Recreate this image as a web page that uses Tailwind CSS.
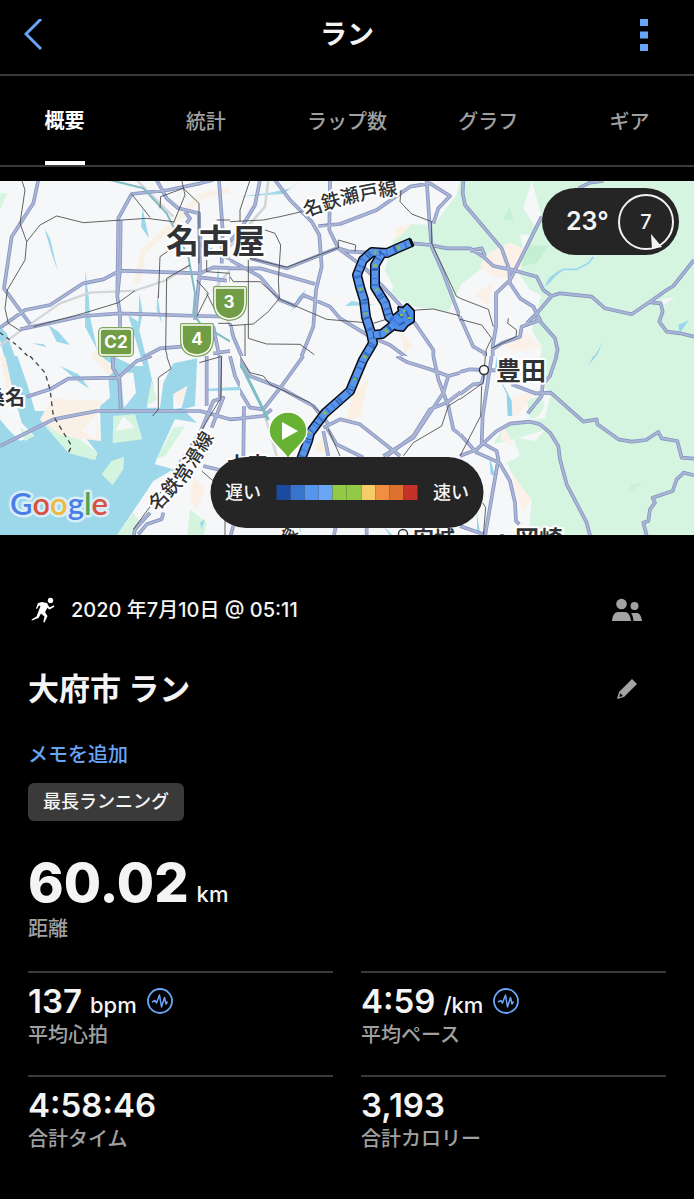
<!DOCTYPE html>
<html lang="ja">
<head>
  <meta charset="UTF-8" />
  <meta name="viewport" content="width=device-width, initial-scale=1" />
  <title>ラン</title>
  <script src="https://cdn.jsdelivr.net/npm/@tailwindcss/browser@4"></script>
</head>
<body class="bg-black text-[#f4f4f4] font-['Inter','Noto_Sans_CJK_JP',sans-serif] min-h-screen overflow-x-hidden">

  <header class="grid grid-cols-3 items-center h-[76px] pl-6 pr-[46px] pb-1 border-b-2 border-[#3a3a3a]">
    <button aria-label="戻る" class="w-6 h-8">
      <svg viewBox="0 0 24 32" class="w-6 h-8 fill-none stroke-[#69a5f7] stroke-[3]"><path d="M17 0L2 15L17 30" /></svg>
    </button>
    <h1 class="pl-[22px] text-center text-[27px] leading-8 font-bold">ラン</h1>
    <button aria-label="メニュー" class="w-2 h-8 justify-self-end">
      <svg viewBox="0 0 8 32" class="w-2 h-8 fill-[#69a5f7]"><path d="M0 0h8v7H0zM0 12.500h8v7H0zM0 25h8v7H0z" /></svg>
    </button>
  </header>

  <nav class="grid grid-cols-5 -mx-[6px] h-[91px] border-b-2 border-[#3a3a3a] text-xl font-medium text-[#a0a0a0]">
    <button class="flex justify-center"><span class="h-[89px] pt-px leading-[89px] border-b-4 border-white text-white font-bold">概要</span></button>
    <button class="pt-[3px] leading-[86px]">統計</button>
    <button class="pt-[3px] leading-[86px]">ラップ数</button>
    <button class="pt-[3px] leading-[86px]">グラフ</button>
    <button class="pt-[3px] leading-[86px]">ギア</button>
  </nav>

  <section class="relative mt-[14px]">
    <svg viewBox="0 181 694 354" class="block w-full h-auto font-['Noto_Sans_CJK_JP',sans-serif]" stroke-linejoin="round" role="img" aria-label="地図">
      <!-- north west -->
      <svg x="0" y="180" width="240" height="180" viewBox="0 0 720 540">
        <defs>
          <path id="road-nw" d="M115 0L100 70L35 170L12 325L90 432M0 443L75 390L150 375L250 310L310 298L360 272L600 280L640 262L720 265M640 0L600 10L505 30L395 42L355 115L352 350L360 400V440M362 120L360 270L352 350M60 448L250 408L360 400L600 408L680 410M470 0L500 55L535 85L597 100L600 270L585 420M555 95L570 115L560 130M657 0L668 150L665 250M600 292L680 302M415 540L480 505L545 500M640 440L660 540M690 430L720 500M640 520L690 513L720 540M600 170L610 200L720 250" />
        </defs>
        <rect width="720" height="540" fill="#f6f7f8" />
        <path d="M410 310L430 215L540 110L600 50L680 30L720 40M280 530L310 500" fill="none" stroke="#faf1e6" stroke-width="18" />
        <path d="M0 40H22L0 90Z" fill="#d6f5e1" />
        <path d="M133 145L150 175L173 272L158 230ZM428 85L435 120L447 175L423 140ZM256 270L266 350L270 410L292 510L255 440ZM418 340L428 400L418 450L440 540H425L395 440L385 405L415 425ZM145 435L175 455L210 495L170 485ZM95 490L130 492L140 502ZM0 440L20 460L48 540H15L0 480ZM472 340L485 430L470 390ZM655 260L660 330L650 300Z" fill="#9cd8e9" />
        <path d="M0 497L80 440L180 370L270 338L405 332L500 300L570 255M410 0L450 40L520 110M720 235L640 330L720 500" fill="none" stroke="#d4d5d7" stroke-width="7" />
        <use href="#road-nw" fill="none" stroke="#8695c1" stroke-width="11" />
        <use href="#road-nw" fill="none" stroke="#abb5d5" stroke-width="6" />
        <path d="M330 0L430 25L500 100L565 230L585 340L580 400L600 430L700 490L720 515" fill="none" stroke="#7fbcc4" stroke-width="6" />
        <path d="M65 0L75 30L60 130L80 185L75 240L22 330L15 385L25 430L60 452M80 185L120 135L170 108L250 128L440 115L520 125M395 42L450 112M100 440L250 400L355 368L405 332M545 0L555 45L520 130M480 85L482 50L550 25L597 70V250M475 355L480 230L530 195M570 255L500 295L497 510L505 540M620 240V275L690 280V305M590 300L625 340L590 410M645 390L620 340M650 120H720M655 430H720" fill="none" stroke="#444" stroke-width="2.500" />
        <path d="M0 458L50 495L95 540" fill="none" stroke="#444" stroke-width="4" stroke-dasharray="12 12" />
      </svg>
      <!-- north -->
      <svg x="230" y="180" width="240" height="180" viewBox="0 0 720 540">
        <defs>
          <path id="road-n" d="M90 0L75 75L30 150L0 185M135 0L180 60L245 125L268 165L275 260L258 330L250 440L210 540M300 0L298 150L325 205L400 260L440 300L510 375L555 430L610 510V540M265 138L330 132L440 90L540 20L600 10L660 48L625 85L610 130M590 0L598 120L605 200L640 280L720 490M0 265L90 265L255 312M0 240L90 290L150 360L195 378L220 345L300 380L330 415L420 470L480 495L540 540M325 205L360 215L420 218M550 190L600 195L650 205H720M700 0L705 70L720 95M60 235L170 265L325 203M0 430L10 470L40 540" />
        </defs>
        <rect width="720" height="540" fill="#f6f7f8" />
        <path d="M490 180L540 132L610 135L680 45L690 0H720V300L690 320L655 395L555 380L480 345L490 320L465 270Z" fill="#d6f5e1" />
        <path d="M495 145L548 130L500 180ZM515 460L550 500L522 520Z" fill="#faf0e4" />
        <path d="M345 378L365 363L435 375ZM230 328L205 350L180 400ZM30 50L120 38L180 25L215 0L160 42Z" fill="#a0daea" />
        <path d="M115 0L105 80L0 200" fill="none" stroke="#d4d5d7" stroke-width="8" />
        <use href="#road-n" fill="none" stroke="#8695c1" stroke-width="11" />
        <use href="#road-n" fill="none" stroke="#abb5d5" stroke-width="6" />
        <path d="M60 0L30 90V125M0 125L100 120L150 110L215 95M105 150L135 160L152 195L145 300L148 355L115 395L70 432L0 437M0 290L10 305H90L150 358M55 240V475L110 492L210 493L253 524M150 358L290 418L430 430L560 390L610 387L720 415M325 205V180L377 195L375 215M513 30L510 65L545 102L605 125V190L680 350L720 365M60 235L170 262L325 203M45 435V540" fill="none" stroke="#444" stroke-width="2.500" />
      </svg>
      <!-- north east -->
      <svg x="460" y="180" width="234" height="180" viewBox="0 0 702 540">
        <defs>
          <path id="road-ne" d="M10 0L8 40L15 75L125 205L148 270L150 310L180 355L220 380L245 430L285 475L293 510L285 540M0 205L30 205L70 230L100 258L150 268L230 290L250 330L275 348L300 340L395 350L435 385L515 403L570 365L620 330L640 318L702 240M570 367L602 370L608 395L598 425L620 455L660 460L702 470M245 110L205 190L150 300L108 340V440L98 500V540M30 212L65 205L75 228M275 348L235 395L200 430M220 410L240 420L185 440L180 470L125 490L95 510M0 410L40 500L75 520V540M355 25L390 8L430 3" />
        </defs>
        <rect width="702" height="540" fill="#d6f5e1" />
        <path d="M215 0L245 110L225 140L190 85ZM180 163L210 165L190 210ZM0 315L60 270L140 190L190 210L175 280L210 330L243 345L230 400L215 450L245 500L240 540H0ZM605 358L645 352L610 375Z" fill="#f6f7f8" />
        <path d="M60 255L90 215L150 188L190 205L185 260L165 300L100 290ZM42 345L100 305L85 380ZM130 500L200 460L245 500L180 515Z" fill="#fbf1e8" />
        <path d="M200 195L265 198L230 250L183 258ZM150 80L160 120L130 120Z" fill="#c5efd2" />
        <path d="M252 322L268 293L305 265L270 308ZM655 435L687 420L660 458ZM430 485L396 540H404Z" fill="#9bd6ef" />
        <path d="M280 290L310 268L350 268L385 250L400 230" fill="none" stroke="#9bd6ef" stroke-width="5" />
        <use href="#road-ne" fill="none" stroke="#8695c1" stroke-width="11" />
        <use href="#road-ne" fill="none" stroke="#abb5d5" stroke-width="6" />
        <path d="M0 355L85 388L100 440M0 418L65 435L95 475L78 510L80 540M145 415L143 430L170 450L168 470L95 505" fill="none" stroke="#444" stroke-width="2.500" />
      </svg>
      <!-- bay -->
      <svg x="0" y="356" width="240" height="182" viewBox="0 0 720 546">
        <defs>
          <path id="road-sw" d="M0 270L160 190L290 165H600L690 190L720 188M80 122L150 100L205 68L355 65L410 15L455 0M340 0L338 35L358 70L362 160M400 546L405 520L450 470M520 350L600 230L640 135L670 125L635 215M620 0V150M660 0V130M415 535L440 505L485 490L490 470M690 0L705 60L720 90M610 330L660 342M690 546L700 510" />
        </defs>
        <rect width="720" height="546" fill="#9cd8ea" />
        <path d="M0 0H15L40 110L65 200L103 240L60 255L20 215L0 190ZM52 0H300L345 30L325 65L330 125L300 150L303 255L240 225L292 290L285 312L205 290L120 190L150 165H135L105 165L85 95ZM345 0H420L430 30L400 30L350 5ZM362 50H400L408 110L372 155ZM440 0H592V7L520 22L490 80L480 155H440L460 90ZM592 0H720V546H345L390 480L460 375L520 340L465 325L470 308L525 190L590 200L550 160L585 150ZM520 115L562 90L545 155L520 160Z" fill="#f6f7f8" />
        <path d="M155 128L310 135L290 165L300 255L180 240L120 190ZM278 0H305L345 45L325 60ZM0 0H15L40 120L20 100ZM580 360L615 400L590 460L570 430ZM520 115L562 90L540 150Z" fill="#faf0e6" />
        <path d="M120 192L180 235L240 250L292 290L285 312L205 290ZM60 215L103 240L75 255ZM340 180L405 175L427 250L338 262ZM305 355L335 315L372 302L370 340L338 388ZM520 215L555 210L495 300L470 308ZM345 546L400 470L425 505L400 546ZM455 75L470 130L440 150ZM570 460L620 500L610 546H560Z" fill="#d5f4df" />
        <path d="M345 225L370 180L405 215ZM290 175V250L245 225Z" fill="#f6f7f8" />
        <path d="M180 30L235 55L268 98L240 80ZM620 98L720 92V103L620 105ZM600 500L615 490L605 520Z" fill="#9cd8ea" />
        <use href="#road-sw" fill="none" stroke="#8695c1" stroke-width="11" />
        <use href="#road-sw" fill="none" stroke="#abb5d5" stroke-width="6" />
        <path d="M500 0L513 38L475 65V160L458 180M598 20L662 2M400 520L540 330L660 130M605 345L640 375M665 0L662 130M675 480V546" fill="none" stroke="#444" stroke-width="2.500" />
        <path d="M90 0L135 50L150 100L160 180L215 270L205 290" fill="none" stroke="#444" stroke-width="4" stroke-dasharray="14 12" />
      </svg>
      <!-- south -->
      <svg x="240" y="356" width="260" height="182" viewBox="120 0 780 546">
        <defs>
          <path id="road-s" d="M90 0L105 80L150 155L190 160L245 90L310 0M90 190L190 180L215 160M110 0L150 60L240 95L340 150L390 210M132 150L130 300M370 215L420 190L480 205L600 300M380 215L410 265L490 305M370 225L385 300M550 300L640 245L730 110L745 60L820 40L900 42M590 0L620 18L690 40L745 60M700 0L715 70L745 150L760 220L850 290M560 300L640 240L690 160L740 140L800 95L850 85M870 0L850 180L845 260M780 300L850 275L900 225M890 300L880 430L855 540M400 546L408 510M500 546V510M780 510L900 540" />
        </defs>
        <rect x="120" width="780" height="546" fill="#f6f7f8" />
        <path d="M460 110L505 70L480 180L435 200ZM340 280L375 235L385 300Z" fill="#fbf0e2" />
        <path d="M865 290L885 360L880 310ZM550 510L580 540H570ZM300 510L305 546H295Z" fill="#9cd8ea" />
        <path d="M195 180L230 300" stroke="#d4d5d7" stroke-width="7" />
        <use href="#road-s" fill="none" stroke="#8695c1" stroke-width="11" />
        <use href="#road-s" fill="none" stroke="#abb5d5" stroke-width="6" />
        <path d="M100 0L130 40L205 192" fill="none" stroke="#7fbcc4" stroke-width="9" />
        <path d="M120 0L150 50L190 60L210 85L330 140L360 170M385 220L420 300M855 80L745 150L725 210L640 260L610 300M845 180L780 300M850 440L858 500" fill="none" stroke="#444" stroke-width="2.500" />
      </svg>
      <!-- south east -->
      <svg x="460" y="356" width="234" height="182" viewBox="0 0 702 546">
        <defs>
          <path id="road-se" d="M290 0L270 60L248 85L245 120L203 172M0 48L30 40L110 43M155 85L225 112L272 110L370 197L410 190L412 205L475 250L515 257L558 252L595 228L605 247L652 255L665 305L702 308M0 300L50 280L110 225L150 203L210 197L240 205L270 230L295 270L300 310L320 385L380 500L392 546M95 0L68 180L65 260L110 285L115 310L75 540M0 235L50 290L118 320L150 375L165 440L168 495L178 505M702 358L672 350L650 370L638 405L578 425L585 440L570 460L565 495L550 500L562 546M0 510L70 535M0 115L40 85L65 82L72 55" />
        </defs>
        <rect width="702" height="546" fill="#d6f5e1" />
        <path d="M0 0H240L235 60L270 120L255 180L230 190L150 205L165 260L180 300L140 320L170 380L215 430L205 546H0Z" fill="#f6f7f8" />
        <path d="M130 210L180 195L160 250L100 265ZM200 130L245 120L260 170L210 190Z" fill="#d6f5e1" />
        <path d="M175 245L255 222L225 255ZM270 122L255 185L230 190Z" fill="#f6f7f8" />
        <path d="M140 130L205 110L240 90L165 190ZM155 350L212 430L190 470L165 400ZM130 205L160 270L120 250Z" fill="#fbf1e8" />
        <path d="M115 60L140 105L155 135L157 180H143L140 115ZM88 300L105 360L92 355ZM110 0L112 40L105 40ZM50 470L60 530L52 525ZM408 0L386 27L400 0Z" fill="#8fd3ec" />
        <path d="M500 415L515 385L550 380Z" fill="#cdeeda" />
        <use href="#road-se" fill="none" stroke="#8695c1" stroke-width="11" />
        <use href="#road-se" fill="none" stroke="#abb5d5" stroke-width="6" />
        <path d="M76 0L70 80L0 130M65 90L62 180L0 300M68 440L77 455L70 540" fill="none" stroke="#444" stroke-width="2.500" />
      </svg>

      <!-- place and line names -->
      <g fill="#303236" stroke="#fff" paint-order="stroke" stroke-width="4" font-weight="700">
        <text x="166" y="253" font-size="33">名古屋</text>
        <text x="496" y="380" font-size="25">豊田</text>
        <text x="-15" y="405" font-size="20">桑名</text>
        <text x="227" y="472" font-size="20">大府</text>
        <text x="413" y="546" font-size="21">安城</text>
        <text x="515" y="548" font-size="24">岡崎</text>
        <path id="seto-line" d="M306 217Q350 200 402 194" fill="none" stroke="none" />
        <path id="tokoname-line" d="M157 512L188 479L220 428" fill="none" stroke="none" />
        <text font-size="19" font-weight="500"><textPath href="#seto-line">名鉄瀬戸線</textPath></text>
        <text font-size="19" font-weight="500"><textPath href="#tokoname-line">名鉄常滑線</textPath></text>
        <text x="290" y="548" font-size="18" font-weight="500" transform="rotate(-62 290 548)">線</text>
      </g>
      <g fill="#fff" stroke="#303236" stroke-width="1.500">
        <circle cx="484" cy="370" r="4.500" />
        <circle cx="403" cy="534" r="4.500" />
        <circle cx="502" cy="538" r="3" fill="#303236" />
      </g>

      <!-- route shields -->
      <g fill="#709d46" stroke="#fff" stroke-width="1.500">
        <g stroke="#7ea55a" stroke-width="4">
          <path d="M215 288H245V303Q244 318 229 319Q215 317 215 303Z" />
          <path d="M182 325H212V340Q211 354 197 355Q182 354 182 340Z" />
          <rect x="100" y="329" width="32" height="26" rx="3" />
        </g>
        <path d="M215 288H245V303Q244 318 229 319Q215 317 215 303Z" />
        <path d="M182 325H212V340Q211 354 197 355Q182 354 182 340Z" />
        <rect x="100" y="329" width="32" height="26" rx="3" />
      </g>
      <g fill="#fff" font-family="Inter, sans-serif" font-weight="700" font-size="17" text-anchor="middle">
        <text x="229" y="308">3</text>
        <text x="197" y="345">4</text>
        <text x="116" y="348">C2</text>
      </g>

      <!-- run track -->
      <defs>
        <path id="track" d="M412 242L398 248L387 253L372 252L363 260L357 275L360 287L364 300L366 317L371 333L373 343L363 360L350 391L325 413L310 433L308 441L300 462M382 253L375 265L375 287L385 303L389 317L397 323M373 335L382 334L391 327L400 318" />
        <path id="track-loop" d="M394 316L400 311L399 308L403 309L407 305L413 311V321L407 325L403 330L396 329L391 324Z" />
      </defs>
      <g fill="none">
        <use href="#track" stroke="#0a0a12" stroke-width="10" />
        <use href="#track-loop" fill="#0a0a12" stroke="#0a0a12" stroke-width="4" />
        <use href="#track" stroke="#5794ea" stroke-width="7" />
        <use href="#track-loop" fill="#4a8ce8" stroke="#4a8ce8" stroke-width="1" />
        <use href="#track" stroke="#3a74cc" stroke-width="7" stroke-dasharray="1 5 2 9 3 7" />
        <use href="#track" stroke="#234f9c" stroke-width="7" stroke-dasharray="1 17 1 29" />
        <use href="#track" stroke="#86b95c" stroke-width="4" stroke-dasharray="0 13 3 22 2 31" />
        <path d="M397 313L403 318M406 311L410 320M399 325L405 322" stroke="#2d63b8" stroke-width="2" />
        <path d="M400 315h3M408 318h3M403 311h2" stroke="#8bc34a" stroke-width="2" />
        <path d="M410 239L413 246" stroke="#0a0a12" stroke-width="3" />
      </g>
      <path d="M288 459C283 449 269 443 269 431A19 19 0 0 1 307 431C307 443 293 449 288 459Z" fill="#67b233" stroke="#fff" stroke-width="1.500" />
      <path d="M282 422L298 431L282 440Z" fill="#fff" />

      <text x="10" y="515" font-family="Lato, sans-serif" font-size="31" font-weight="600" stroke="#d9eff6" stroke-width="5" paint-order="stroke"><tspan fill="#4a7de8">G</tspan><tspan fill="#d95140">o</tspan><tspan fill="#efb93b">o</tspan><tspan fill="#4a7de8">g</tspan><tspan fill="#4ba65a">l</tspan><tspan fill="#d95140">e</tspan></text>
    </svg>

    <!-- weather -->
    <div class="absolute top-[7px] right-[15px] flex items-center justify-between w-[137px] h-[67px] pl-6 pr-1 rounded-[34px] bg-[#252525]">
      <span class="text-[25px] font-semibold">23°</span>
      <svg viewBox="0 0 58 58" class="w-[58px] h-[58px] fill-none">
        <circle cx="29" cy="29" r="27" stroke="#f2f2f2" stroke-width="2" />
        <path d="M34 41L45 54L35 56Z" fill="#f2f2f2" />
        <text x="29" y="36" text-anchor="middle" font-size="20" font-weight="500" fill="#f2f2f2">7</text>
      </svg>
    </div>

    <!-- pace scale -->
    <div class="absolute bottom-[7px] left-1/2 -translate-x-1/2 flex items-center justify-center gap-[15px] w-[273px] h-[71px] rounded-[36px] bg-[#252525] text-lg font-medium">
      <span>遅い</span>
      <div class="grid grid-cols-10 w-[142px] h-[15px]">
        <i class="bg-[#1b4ba0]"></i>
        <i class="bg-[#3974cc]"></i>
        <i class="bg-[#5595ee]"></i>
        <i class="bg-[#6aa6f5]"></i>
        <i class="bg-[#92c947]"></i>
        <i class="bg-[#92c947]"></i>
        <i class="bg-[#f4cd66]"></i>
        <i class="bg-[#f08f42]"></i>
        <i class="bg-[#de7030]"></i>
        <i class="bg-[#c53229]"></i>
      </div>
      <span>速い</span>
    </div>
  </section>

  <main class="px-7 pt-[59px] pb-10">
    <div class="flex items-center h-8">
      <svg viewBox="0 0 24 26" class="w-6 h-[26px] ml-[3px] mr-4 fill-none stroke-white" stroke-linejoin="round">
        <circle cx="19.500" cy="3.500" r="2.700" fill="#fff" stroke="none" />
        <path d="M11 5L16 6L17.500 9L14 15L16.500 19L13.500 25.500L12.300 25L13.500 19.500L10 16.500L7.500 21L1 23.500L.5 22.500L5.500 19.500L9.500 9L8 8.500L6 12L5 11.500L7 6Z" fill="#fff" stroke="none" />
        <path d="M15.500 8.500L18.500 11.500L23 9" stroke-width="1.800" />
      </svg>
      <time class="text-xl font-medium">2020 年7月10日 @ 05:11</time>
      <button aria-label="公開設定" class="ml-auto mr-6">
        <svg viewBox="0 0 30 24" class="w-[30px] h-6 fill-[#a3a3a3]">
          <circle cx="9.500" cy="6" r="5.300" /><circle cx="22.500" cy="8" r="4" />
          <path d="M0 23C.5 17 3 14 6 14H13C16.500 14 18.500 18 19 23ZM19 15H25C28 15 29.500 19 30 23H21.500C21.300 19.500 20.500 17 19 15Z" />
        </svg>
      </button>
    </div>

    <div class="flex items-center h-10 mt-[43px]">
      <h2 class="text-[31px] leading-10 font-bold">大府市 ラン</h2>
      <button aria-label="名前を編集" class="ml-auto mr-[29px]">
        <svg viewBox="0 0 20 20" class="w-5 h-5">
          <path d="M15 0L20 5L7 18L0 20L2 13Z" fill="#a3a3a3" />
          <path d="M3 14L6 17L2.500 18Z" fill="#000" />
        </svg>
      </button>
    </div>

    <a href="#" class="block w-fit mt-8 text-xl leading-7 font-medium text-[#69a5f7]">メモを追加</a>
    <div class="w-fit mt-[14px] px-[15px] rounded-md bg-[#3a3a3a] text-lg leading-[38px] font-medium">最長ランニング</div>

    <div class="mt-8">
      <p class="flex items-baseline gap-2 h-[60px] leading-[60px]"><b class="text-[54px] font-extrabold">60.02</b><span class="text-[22px] font-medium">km</span></p>
      <p class="text-xl leading-8 font-medium text-[#a0a0a0]">距離</p>
    </div>

    <div class="grid grid-cols-2 gap-x-7 mt-[26px]">
      <div class="h-[104px] pt-2 border-t-2 border-[#3a3a3a]">
        <div class="flex items-center h-10">
          <p class="flex items-baseline gap-2 mr-[10px]"><b class="text-[33px] leading-10 font-semibold">137</b><span class="text-[22px] font-medium">bpm</span></p>
          <button aria-label="平均心拍グラフ">
            <svg viewBox="0 0 26 26" class="block w-[26px] h-[26px] fill-none stroke-[#69a5f7]" stroke-linejoin="round">
              <circle cx="13" cy="13" r="12" stroke-width="1.800" />
              <path d="M5 14L8 12.500L9.500 15L12.500 7L14.500 19L17.500 9.500L19 16L20.500 13.500" stroke-width="1.500" />
            </svg>
          </button>
        </div>
        <p class="text-xl leading-7 font-medium text-[#a0a0a0]">平均心拍</p>
      </div>
      <div class="h-[104px] pt-2 border-t-2 border-[#3a3a3a]">
        <div class="flex items-center h-10">
          <p class="flex items-baseline gap-2 mr-[10px]"><b class="text-[33px] leading-10 font-semibold">4:59</b><span class="text-[22px] font-medium">/km</span></p>
          <button aria-label="平均ペースグラフ">
            <svg viewBox="0 0 26 26" class="block w-[26px] h-[26px] fill-none stroke-[#69a5f7]" stroke-linejoin="round">
              <circle cx="13" cy="13" r="12" stroke-width="1.800" />
              <path d="M5 14L8 12.500L9.500 15L12.500 7L14.500 19L17.500 9.500L19 16L20.500 13.500" stroke-width="1.500" />
            </svg>
          </button>
        </div>
        <p class="text-xl leading-7 font-medium text-[#a0a0a0]">平均ペース</p>
      </div>
      <div class="pt-2 border-t-2 border-[#3a3a3a]">
        <p class="text-[33px] leading-10 font-semibold">4:58:46</p>
        <p class="text-xl leading-7 font-medium text-[#a0a0a0]">合計タイム</p>
      </div>
      <div class="pt-2 border-t-2 border-[#3a3a3a]">
        <p class="text-[33px] leading-10 font-semibold">3,193</p>
        <p class="text-xl leading-7 font-medium text-[#a0a0a0]">合計カロリー</p>
      </div>
    </div>
  </main>
</body>
</html>
